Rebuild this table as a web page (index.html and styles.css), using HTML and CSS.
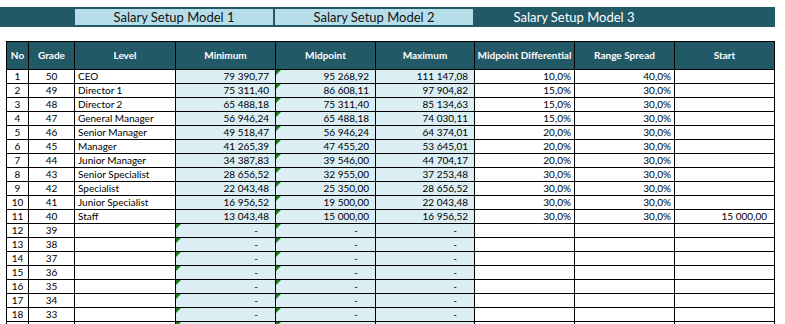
FILE: index.html
```html
<!DOCTYPE html>
<html lang="en">
<head>
<meta charset="utf-8">
<title>Salary Setup</title>
<link rel="stylesheet" href="styles.css">
</head>
<body>
<div class="topbar">
  <div class="tab tab-light">Salary Setup Model 1</div>
  <div class="tab tab-light">Salary Setup Model 2</div>
  <div class="tab tab-dark">Salary Setup Model 3</div>
</div>

<div class="sheet">
  <div class="h">No</div><div class="h">Grade</div><div class="h">Level</div><div class="h">Minimum</div><div class="h">Midpoint</div><div class="h">Maximum</div><div class="h">Midpoint Differential</div><div class="h">Range Spread</div><div class="h">Start</div>

  <div class="c">1</div><div class="c">50</div><div class="t">CEO</div><div class="n b">79 390,77</div><div class="n b tri">95 268,92</div><div class="n b">111 147,08</div><div class="p">10,0%</div><div class="p">40,0%</div><div class="s"></div>
  <div class="c">2</div><div class="c">49</div><div class="t">Director 1</div><div class="n b">75 311,40</div><div class="n b tri">86 608,11</div><div class="n b">97 904,82</div><div class="p">15,0%</div><div class="p">30,0%</div><div class="s"></div>
  <div class="c">3</div><div class="c">48</div><div class="t">Director 2</div><div class="n b">65 488,18</div><div class="n b tri">75 311,40</div><div class="n b">85 134,63</div><div class="p">15,0%</div><div class="p">30,0%</div><div class="s"></div>
  <div class="c">4</div><div class="c">47</div><div class="t">General Manager</div><div class="n b">56 946,24</div><div class="n b tri">65 488,18</div><div class="n b">74 030,11</div><div class="p">15,0%</div><div class="p">30,0%</div><div class="s"></div>
  <div class="c">5</div><div class="c">46</div><div class="t">Senior Manager</div><div class="n b">49 518,47</div><div class="n b tri">56 946,24</div><div class="n b">64 374,01</div><div class="p">20,0%</div><div class="p">30,0%</div><div class="s"></div>
  <div class="c">6</div><div class="c">45</div><div class="t">Manager</div><div class="n b">41 265,39</div><div class="n b tri">47 455,20</div><div class="n b">53 645,01</div><div class="p">20,0%</div><div class="p">30,0%</div><div class="s"></div>
  <div class="c">7</div><div class="c">44</div><div class="t">Junior Manager</div><div class="n b">34 387,83</div><div class="n b tri">39 546,00</div><div class="n b">44 704,17</div><div class="p">20,0%</div><div class="p">30,0%</div><div class="s"></div>
  <div class="c">8</div><div class="c">43</div><div class="t">Senior Specialist</div><div class="n b">28 656,52</div><div class="n b tri">32 955,00</div><div class="n b">37 253,48</div><div class="p">30,0%</div><div class="p">30,0%</div><div class="s"></div>
  <div class="c">9</div><div class="c">42</div><div class="t">Specialist</div><div class="n b">22 043,48</div><div class="n b tri">25 350,00</div><div class="n b">28 656,52</div><div class="p">30,0%</div><div class="p">30,0%</div><div class="s"></div>
  <div class="c">10</div><div class="c">41</div><div class="t">Junior Specialist</div><div class="n b">16 956,52</div><div class="n b tri">19 500,00</div><div class="n b">22 043,48</div><div class="p">30,0%</div><div class="p">30,0%</div><div class="s"></div>
  <div class="c">11</div><div class="c">40</div><div class="t">Staff</div><div class="n b">13 043,48</div><div class="n b tri">15 000,00</div><div class="n b">16 956,52</div><div class="p">30,0%</div><div class="p">30,0%</div><div class="s">15 000,00</div>

  <div class="c">12</div><div class="c">39</div><div class="t"></div><div class="d b tri">-</div><div class="d b tri">-</div><div class="d b">-</div><div class="p"></div><div class="p"></div><div class="s"></div>
  <div class="c">13</div><div class="c">38</div><div class="t"></div><div class="d b tri">-</div><div class="d b tri">-</div><div class="d b">-</div><div class="p"></div><div class="p"></div><div class="s"></div>
  <div class="c">14</div><div class="c">37</div><div class="t"></div><div class="d b tri">-</div><div class="d b tri">-</div><div class="d b">-</div><div class="p"></div><div class="p"></div><div class="s"></div>
  <div class="c">15</div><div class="c">36</div><div class="t"></div><div class="d b tri">-</div><div class="d b tri">-</div><div class="d b">-</div><div class="p"></div><div class="p"></div><div class="s"></div>
  <div class="c">16</div><div class="c">35</div><div class="t"></div><div class="d b tri">-</div><div class="d b tri">-</div><div class="d b">-</div><div class="p"></div><div class="p"></div><div class="s"></div>
  <div class="c">17</div><div class="c">34</div><div class="t"></div><div class="d b tri">-</div><div class="d b tri">-</div><div class="d b">-</div><div class="p"></div><div class="p"></div><div class="s"></div>
  <div class="c">18</div><div class="c">33</div><div class="t"></div><div class="d b tri">-</div><div class="d b tri">-</div><div class="d b">-</div><div class="p"></div><div class="p"></div><div class="s"></div>
  <div class="c"></div><div class="c"></div><div class="t"></div><div class="d b tri"></div><div class="d b tri"></div><div class="d b"></div><div class="p"></div><div class="p"></div><div class="s"></div>
</div>
</body>
</html>
```

FILE: styles.css
```css
html, body {
  margin: 0;
  padding: 0;
  background: #ffffff;
  overflow: hidden;
}

body {
  font-family: Lato, "Open Sans", "Liberation Sans", sans-serif;
  color: #000000;
}

.topbar {
  margin-top: 7px;
  width: 775px;
  height: 20px;
  background: #215967;
  display: flex;
  gap: 2px;
  padding-left: 75px;
  box-sizing: border-box;
}

.tab {
  width: 198px;
  margin: 2px 0;
  font-size: 13px;
  line-height: 16px;
  text-align: center;
}

.tab-light {
  background: #b7dee8;
  color: #111111;
}

.tab-dark {
  color: #ffffff;
}

.sheet {
  margin: 14px 0 0 6px;
  display: grid;
  grid-template-columns: 21px 45px 100px 99px 99px 98px 99px 99px 99px;
  grid-template-rows: 27px;
  grid-auto-rows: 13px;
  gap: 1px;
  padding: 1px;
  background: #000000;
  width: max-content;
  font-size: 10px;
  line-height: 13px;
}

.sheet > div {
  background: #ffffff;
  white-space: nowrap;
  overflow: hidden;
  position: relative;
}

.sheet > .h {
  background: #215967;
  color: #ffffff;
  font-weight: 700;
  display: flex;
  align-items: center;
  justify-content: center;
}

.c {
  text-align: center;
}

.t {
  padding-left: 3px;
}

.n {
  text-align: right;
  padding-right: 6px;
}

.d {
  text-align: right;
  padding-right: 17px;
}

.p {
  text-align: right;
  padding-right: 3px;
}

.s {
  text-align: right;
  padding-right: 7px;
}

.sheet > .b {
  background: #daeef3;
}

.tri::before {
  content: "";
  position: absolute;
  top: 0;
  left: 0;
  border-top: 5px solid #1e7b1e;
  border-right: 5px solid transparent;
}
```
